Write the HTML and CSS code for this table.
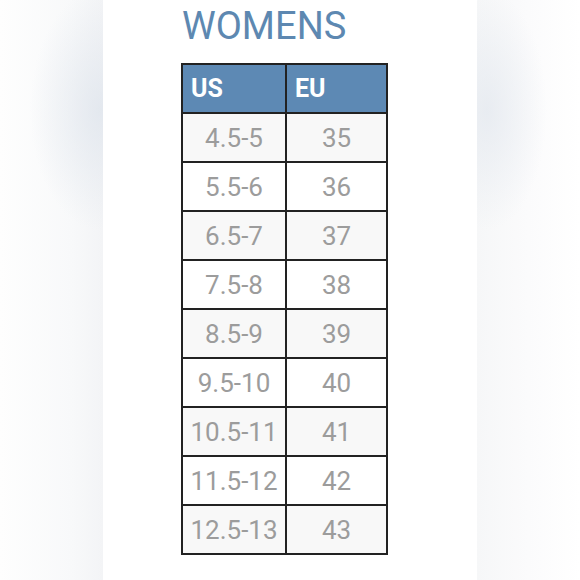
FILE: index.html
```html
<!DOCTYPE html>
<html>
<head>
<meta charset="utf-8">
<link rel="stylesheet" href="styles.css">
</head>
<body>
<div class="page">
  <div class="side side-left"></div>
  <main class="panel">
    <h1 class="title">WOMENS</h1>
    <table class="sizes">
      <thead>
        <tr><th>US</th><th>EU</th></tr>
      </thead>
      <tbody>
        <tr><td>4.5-5</td><td>35</td></tr>
        <tr><td>5.5-6</td><td>36</td></tr>
        <tr><td>6.5-7</td><td>37</td></tr>
        <tr><td>7.5-8</td><td>38</td></tr>
        <tr><td>8.5-9</td><td>39</td></tr>
        <tr><td>9.5-10</td><td>40</td></tr>
        <tr><td>10.5-11</td><td>41</td></tr>
        <tr><td>11.5-12</td><td>42</td></tr>
        <tr><td>12.5-13</td><td>43</td></tr>
      </tbody>
    </table>
  </main>
  <div class="side side-right"></div>
</div>
</body>
</html>
```

FILE: styles.css
```css
html, body {
  margin: 0;
  padding: 0;
}
body {
  width: 580px;
  height: 580px;
  overflow: hidden;
  font-family: Roboto, "Liberation Sans", sans-serif;
}
.page {
  display: flex;
  width: 580px;
  height: 580px;
}
.side {
  width: 103px;
  height: 580px;
}
.side-left {
  background:
    radial-gradient(ellipse 70px 120px at 100px 110px, rgba(222,228,236,0.75), rgba(222,228,236,0) 100%),
    linear-gradient(to right, #fefefe 0%, #f8f9fa 70%, #f3f4f6 100%);
}
.side-right {
  background:
    radial-gradient(ellipse 60px 120px at 10px 110px, rgba(226,231,238,0.7), rgba(226,231,238,0) 100%),
    linear-gradient(to right, #f6f7f8 0%, #fbfbfc 50%, #ffffff 100%);
}
.panel {
  width: 374px;
  background: #ffffff;
  padding: 4px 0 0 78px;
  box-sizing: border-box;
}
.title {
  margin: 0 0 15px 1px;
  font-size: 38px;
  line-height: 44px;
  font-weight: 400;
  color: #5d88b1;
}
.sizes {
  border-collapse: separate;
  border-spacing: 0;
  border-top: 2px solid #222;
  border-left: 2px solid #222;
}
.sizes th,
.sizes td {
  height: 47px;
  padding: 0;
  border-right: 2px solid #222;
  border-bottom: 2px solid #222;
  vertical-align: middle;
}
.sizes td:first-child {
  width: 102px;
}
.sizes td:last-child {
  width: 99px;
}
.sizes th {
  background: #5d89b4;
  color: #ffffff;
  font-size: 25px;
  font-weight: 700;
  text-align: left;
  padding-left: 8px;
}
.sizes td {
  font-size: 26px;
  color: #9c9c9c;
  text-align: center;
}
.sizes tbody tr:nth-child(odd) td {
  background: #f8f8f8;
}
.sizes tbody tr:nth-child(even) td {
  background: #ffffff;
}
```
